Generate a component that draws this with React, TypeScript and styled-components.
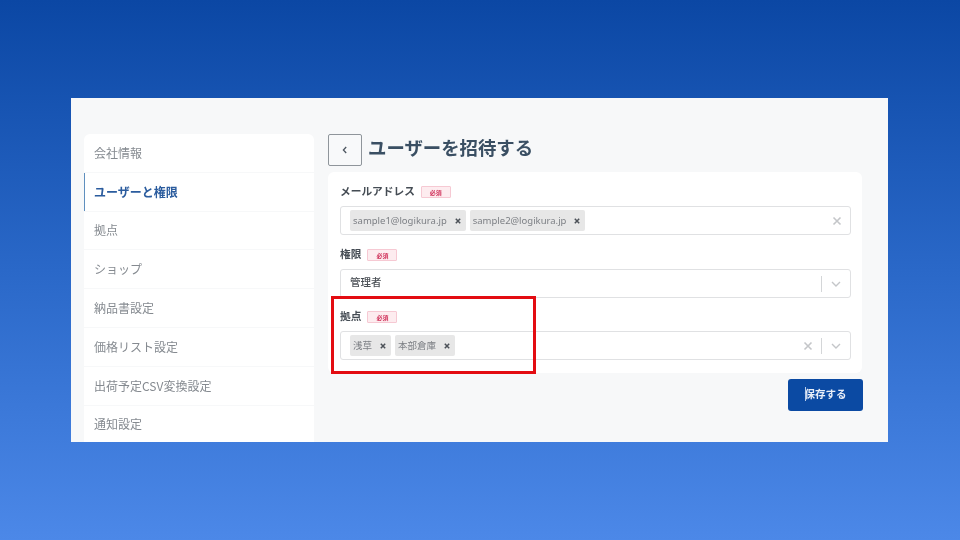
import React from 'react'
import styled, { createGlobalStyle } from 'styled-components'

const GlobalStyle = createGlobalStyle`
  html, body {
    margin: 0;
    padding: 0;
  }
  body {
    font-family: "Noto Sans CJK JP", "Noto Sans", "Liberation Sans", sans-serif;
  }
`

const Stage = styled.div`
  width: 960px;
  height: 540px;
  padding-top: 98px;
  box-sizing: border-box;
  overflow: hidden;
  background: linear-gradient(180deg, #0b47a4 0%, #2a68c8 50%, #4c88e8 100%);
`

const Panel = styled.div`
  position: relative;
  width: 817px;
  height: 344px;
  margin-left: 71px;
  padding: 36px 26px 0 13px;
  box-sizing: border-box;
  display: flex;
  gap: 14px;
  overflow: hidden;
  background: #f7f8f9;
  filter: blur(0.7px);
`

const Sidebar = styled.nav`
  width: 230px;
  flex-shrink: 0;
  display: flex;
  flex-direction: column;
  gap: 1px;
`

const NavItem = styled.div<{ $active?: boolean }>`
  height: 37.8px;
  flex-shrink: 0;
  display: flex;
  align-items: center;
  padding: 0 0 1px 9px;
  box-sizing: border-box;
  background: #fff;
  font-size: 12px;
  color: ${p => (p.$active ? '#2b5c9e' : '#858a90')};
  font-weight: ${p => (p.$active ? 700 : 400)};
  border-left: 1px solid ${p => (p.$active ? '#5f8fbe' : 'transparent')};
  &:first-child {
    border-radius: 6px 6px 0 0;
  }
`

const Main = styled.main`
  flex: 1;
  min-width: 0;
  display: flex;
  flex-direction: column;
`

const TitleRow = styled.div`
  display: flex;
  align-items: center;
  gap: 6px;
  height: 32px;
  margin-bottom: 6px;
`

const BackButton = styled.button`
  width: 34px;
  height: 32px;
  padding: 0;
  display: flex;
  align-items: center;
  justify-content: center;
  box-sizing: border-box;
  background: #f8f9fa;
  border: 1px solid #8f959b;
  border-radius: 2px;
`

const Title = styled.h1`
  margin: 0;
  padding-bottom: 6px;
  font-size: 18.4px;
  font-weight: 700;
  line-height: 28px;
  color: #3a4f63;
`

const FormCard = styled.section`
  height: 201px;
  padding: 12px 11px 0 12px;
  box-sizing: border-box;
  display: flex;
  flex-direction: column;
  background: #fff;
  border-radius: 6px;
`

const Field = styled.div<{ $height: number }>`
  height: ${p => p.$height}px;
  flex-shrink: 0;
`

const LabelRow = styled.div`
  height: 22px;
  display: flex;
  align-items: flex-start;
  gap: 6px;
`

const Label = styled.span`
  font-size: 10.7px;
  line-height: 14px;
  font-weight: 700;
  color: #454c54;
`

const Required = styled.span`
  width: 30px;
  height: 12px;
  margin-top: 2px;
  display: flex;
  align-items: center;
  justify-content: center;
  box-sizing: border-box;
  background: #fdecef;
  border: 1px solid #f6c9d3;
  border-radius: 1px;
  font-size: 6px;
  font-weight: 700;
  color: #d0345c;
`

const SelectBox = styled.div`
  width: 511px;
  height: 29px;
  padding: 0 8px 0 9px;
  box-sizing: border-box;
  display: flex;
  align-items: center;
  background: #fff;
  border: 1px solid #e0e1e3;
  border-radius: 3px;
`

const Chips = styled.div`
  flex: 1;
  display: flex;
  gap: 4px;
`

const Chip = styled.span`
  height: 21px;
  padding: 0 5px 1px 3px;
  box-sizing: border-box;
  display: flex;
  align-items: center;
  gap: 8px;
  background: #e7e7e7;
  border-radius: 2px;
  font-family: "Noto Sans", "Noto Sans CJK JP", sans-serif;
  font-size: 9.5px;
  color: #7c7f84;
`

const ChipClose = styled.svg`
  width: 6px;
  height: 6px;
  margin-top: 1px;
  fill: none;
  stroke: #4c5158;
  stroke-width: 1.5;
`

const Value = styled.span`
  flex: 1;
  padding-bottom: 5px;
  font-size: 10.5px;
  font-weight: 500;
  color: #4b5056;
`

const ClearIcon = styled.span`
  display: flex;
  color: #c4c6c9;
`

const Divider = styled.span`
  width: 1px;
  height: 16px;
  margin: 0 8px;
  background: #d4d6d8;
`

const Footer = styled.div`
  display: flex;
  justify-content: flex-end;
  margin: 6px -1px 0 0;
`

const SaveButton = styled.button`
  position: relative;
  width: 75px;
  height: 32px;
  padding: 0 0 4px;
  border: none;
  border-radius: 3px;
  background: #0b4aa3;
  color: #e8eef8;
  font-family: inherit;
  font-size: 10.5px;
  font-weight: 700;
  &::before {
    content: '';
    position: absolute;
    left: 17px;
    top: 8px;
    width: 1px;
    height: 14px;
    background: #b9cdea;
  }
`

const Highlight = styled.div`
  position: absolute;
  left: 260px;
  top: 198px;
  width: 205px;
  height: 78px;
  box-sizing: border-box;
  border: 3px solid #e30c12;
`

const NAV_ITEMS = [
  '会社情報',
  'ユーザーと権限',
  '拠点',
  'ショップ',
  '納品書設定',
  '価格リスト設定',
  '出荷予定CSV変換設定',
  '通知設定',
]

const Cross = () => (
  <svg width="10" height="10" viewBox="0 0 10 10" fill="none" stroke="currentColor" strokeWidth="1.6">
    <path d="M1.5 1.5l7 7M8.5 1.5l-7 7" />
  </svg>
)

const Chevron = () => (
  <svg width="12" height="8" viewBox="0 0 12 8" fill="none" stroke="#c4c6c9" strokeWidth="1.4">
    <path d="M2 2l4 4 4-4" />
  </svg>
)

const TagClose = () => (
  <ChipClose viewBox="0 0 6 6">
    <path d="M.8.8l4.4 4.4M5.2.8L.8 5.2" />
  </ChipClose>
)

const App: React.FC = () => {
  return (
    <Stage>
      <GlobalStyle />
      <Panel>
        <Sidebar>
          {NAV_ITEMS.map((item, i) => (
            <NavItem key={item} $active={i === 1}>
              {item}
            </NavItem>
          ))}
        </Sidebar>
        <Main>
          <TitleRow>
            <BackButton aria-label="戻る">
              <svg width="8" height="10" viewBox="0 0 8 10" fill="none" stroke="#4d5660" strokeWidth="1.3">
                <path d="M5.2 2L2.4 5l2.8 3" />
              </svg>
            </BackButton>
            <Title>ユーザーを招待する</Title>
          </TitleRow>
          <FormCard>
            <Field $height={63}>
              <LabelRow>
                <Label>メールアドレス</Label>
                <Required>必須</Required>
              </LabelRow>
              <SelectBox>
                <Chips>
                  <Chip>
                    sample1@logikura.jp
                    <TagClose />
                  </Chip>
                  <Chip>
                    sample2@logikura.jp
                    <TagClose />
                  </Chip>
                </Chips>
                <ClearIcon>
                  <Cross />
                </ClearIcon>
              </SelectBox>
            </Field>
            <Field $height={62}>
              <LabelRow>
                <Label>権限</Label>
                <Required>必須</Required>
              </LabelRow>
              <SelectBox>
                <Value>管理者</Value>
                <Divider />
                <Chevron />
              </SelectBox>
            </Field>
            <Field $height={63}>
              <LabelRow>
                <Label>拠点</Label>
                <Required>必須</Required>
              </LabelRow>
              <SelectBox>
                <Chips>
                  <Chip>
                    浅草
                    <TagClose />
                  </Chip>
                  <Chip>
                    本部倉庫
                    <TagClose />
                  </Chip>
                </Chips>
                <ClearIcon>
                  <Cross />
                </ClearIcon>
                <Divider />
                <Chevron />
              </SelectBox>
            </Field>
          </FormCard>
          <Footer>
            <SaveButton>保存する</SaveButton>
          </Footer>
        </Main>
        <Highlight />
      </Panel>
    </Stage>
  )
}

export default App
